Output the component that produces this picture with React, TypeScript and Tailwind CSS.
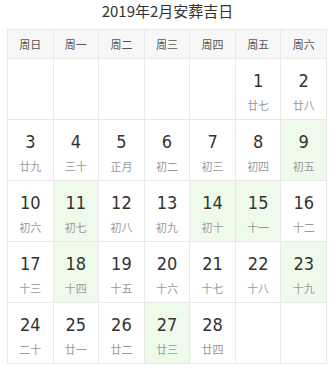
import React from "react";

const weeks = ["周日", "周一", "周二", "周三", "周四", "周五", "周六"];

type Cell = { d: number; l: string; g?: boolean } | null;

const cells: Cell[] = [
  null, null, null, null, null,
  { d: 1, l: "廿七" }, { d: 2, l: "廿八" },
  { d: 3, l: "廿九" }, { d: 4, l: "三十" }, { d: 5, l: "正月" }, { d: 6, l: "初二" }, { d: 7, l: "初三" }, { d: 8, l: "初四" }, { d: 9, l: "初五", g: true },
  { d: 10, l: "初六" }, { d: 11, l: "初七", g: true }, { d: 12, l: "初八" }, { d: 13, l: "初九" }, { d: 14, l: "初十", g: true }, { d: 15, l: "十一", g: true }, { d: 16, l: "十二" },
  { d: 17, l: "十三" }, { d: 18, l: "十四", g: true }, { d: 19, l: "十五" }, { d: 20, l: "十六" }, { d: 21, l: "十七" }, { d: 22, l: "十八" }, { d: 23, l: "十九", g: true },
  { d: 24, l: "二十" }, { d: 25, l: "廿一" }, { d: 26, l: "廿二" }, { d: 27, l: "廿三", g: true }, { d: 28, l: "廿四" }, null, null,
];

export default function App() {
  return (
    <div className="w-[335px] h-[373px] bg-white" style={{ fontFamily: '"Noto Sans CJK SC", sans-serif' }}>
      <div className="h-[29px] flex items-start justify-center pt-[1px] text-[15px] leading-[20px] text-[#333]">
        2019年2月安葬吉日
      </div>
      <div className="ml-[7px] w-[320px] border-l border-t border-[#e9e9e9] grid grid-cols-7">
        {weeks.map((w) => (
          <div key={w} className="h-[29px] flex items-center justify-center bg-[#f7f7f7] border-r border-b border-[#e9e9e9] text-[11px] text-[#555]">
            {w}
          </div>
        ))}
        {cells.map((c, i) => (
          <div
            key={i}
            className={
              "h-[61px] border-r border-b border-[#e9e9e9] flex flex-col items-center " +
              (c && c.g ? "bg-[#effbea]" : "bg-white")
            }
          >
            {c && (
              <>
                <div
                  className="mt-[9px] text-[18px] leading-[26px] text-[#333] font-stretch-condensed"
                  style={{ fontFamily: '"DejaVu Sans Condensed", "DejaVu Sans", sans-serif' }}
                >
                  {c.d}
                </div>
                <div className="mt-[2px] text-[11px] leading-[18px] text-[#9a9a9a]">{c.l}</div>
              </>
            )}
          </div>
        ))}
      </div>
    </div>
  );
}
